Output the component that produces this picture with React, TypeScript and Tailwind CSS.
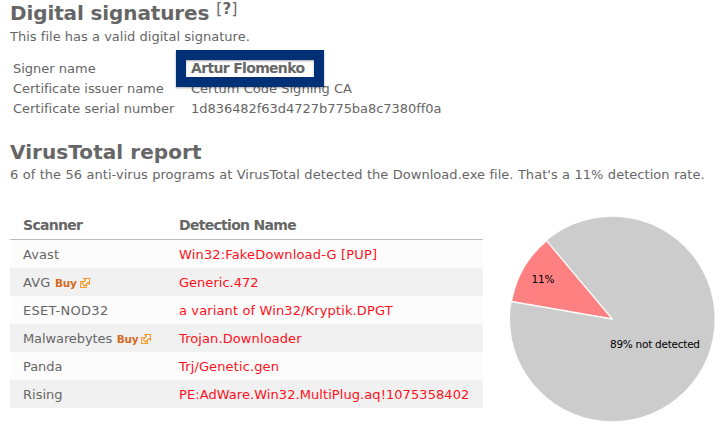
import React from "react";

type Row = { scanner: string; buy?: boolean; name: string; scannerTrack: string; nameTrack: string };

const rows: Row[] = [
  { scanner: "Avast", name: "Win32:FakeDownload-G [PUP]", scannerTrack: "tracking-[0.1px]", nameTrack: "tracking-[0.16px]" },
  { scanner: "AVG", buy: true, name: "Generic.472", scannerTrack: "tracking-[0.1px]", nameTrack: "tracking-[0.02px]" },
  { scanner: "ESET-NOD32", name: "a variant of Win32/Kryptik.DPGT", scannerTrack: "tracking-[0.28px]", nameTrack: "tracking-[0.13px]" },
  { scanner: "Malwarebytes", buy: true, name: "Trojan.Downloader", scannerTrack: "tracking-[-0.1px]", nameTrack: "tracking-[0.1px]" },
  { scanner: "Panda", name: "Trj/Genetic.gen", scannerTrack: "tracking-[-0.05px]", nameTrack: "tracking-[0.13px]" },
  { scanner: "Rising", name: "PE:AdWare.Win32.MultiPlug.aq!1075358402", scannerTrack: "tracking-[0px]", nameTrack: "tracking-[0.07px]" },
];

function ExternalIcon() {
  return (
    <svg width="10" height="10" viewBox="0 0 10 10" className="mb-px ml-[3px] shrink-0" fill="none">
      <path d="M4 3.5H.5V9.5H6.5V6.5" stroke="#f9a02b" strokeWidth="1.2" />
      <path d="M4 .5H9.5V6L7.8 4.5L4.5 7.8L2.3 5.6L5.6 2.3Z" fill="#fff" stroke="#f9932b" strokeWidth="1.2" />
    </svg>
  );
}

function Pie() {
  return (
    <svg width="208" height="208" viewBox="508 215 208 208" className="block shrink-0">
      <circle cx="612.3" cy="319" r="102.3" fill="#ccc" />
      <path d="M612.3 319L546.5 240.7A102.3 102.3 0 0 0 511.5 301.5Z" fill="#ff8080" stroke="#fff" strokeWidth="1.3" strokeLinejoin="round" />
      <text x="531.5" y="283" fontSize="10.5" fill="#000" textLength="23">11%</text>
      <text x="610" y="348" fontSize="10.5" fill="#000" textLength="90">89% not detected</text>
    </svg>
  );
}

export default function App() {
  return (
    <div className="h-[435px] w-[722px] overflow-hidden bg-white pl-[10px] font-['DejaVu_Sans',sans-serif] text-[13px] text-[#666]">
      <div className="flex h-[27px] items-start">
        <h2 className="text-[20px] leading-[26px] font-bold tracking-[-0.12px] whitespace-nowrap">Digital signatures</h2>
        <span className="ml-[7px] text-[15px] leading-[18px] tracking-[0.3px]">[<b>?</b>]</span>
      </div>
      <p className="h-[32px] leading-[20px] tracking-[0.02px] whitespace-nowrap">This file has a valid digital signature.</p>
      <div className="relative grid h-[80px] grid-cols-[178px_1fr] grid-rows-[20px_20px_20px] pl-[3px] leading-[20px] whitespace-nowrap">
        <span>Signer name</span>
        <span />
        <span className="tracking-[-0.03px]">Certificate issuer name</span>
        <span className="tracking-[0.02px]">Certum Code Signing CA</span>
        <span className="tracking-[-0.02px]">Certificate serial number</span>
        <span className="tracking-[-0.04px]">1d836482f63d4727b775ba8c7380ff0a</span>
        <div className="absolute top-[-9px] left-[166px] h-[37px] w-[148px] border-[10px] border-[#003075] bg-white pl-[5px] text-[14px] leading-[17px] font-bold tracking-[-0.67px] shadow-[0_1px_2px_rgba(0,0,0,0.35)]">
          <div className="absolute inset-0 shadow-[inset_0_1px_2px_rgba(0,0,0,0.35)]" />
          Artur Flomenko
        </div>
      </div>
      <h2 className="h-[26px] text-[20px] leading-[26px] font-bold tracking-[0.06px] whitespace-nowrap">VirusTotal report</h2>
      <p className="h-[46px] leading-[20px] tracking-[0.04px] whitespace-nowrap [word-spacing:0.2px]">6 of the 56 anti-virus programs at VirusTotal detected the Download.exe file. That's a 11% detection rate.</p>
      <div className="flex items-start">
        <table className="w-[473px] table-fixed border-separate border-spacing-0">
          <thead>
            <tr className="text-left text-[14px] leading-[28px] tracking-[-0.7px]">
              <th className="w-[156px] border-b border-[#bbb] p-0 pl-[13px]">Scanner</th>
              <th className="border-b border-[#bbb] p-0 pl-[13px]">Detection Name</th>
            </tr>
          </thead>
          <tbody>
            {rows.map((r) => (
              <tr key={r.scanner} className="h-[28px] leading-[26px] odd:bg-[#fcfcfc] even:bg-[#f1f1f1]">
                <td className="p-0 pt-[2px] pl-[13px]">
                  <div className="flex h-[26px] items-center whitespace-nowrap">
                    <span className={r.scannerTrack}>{r.scanner}</span>
                    {r.buy && (
                      <span className="ml-[4.6px] flex h-[26px] items-center text-[10.5px] font-bold tracking-[-0.25px] text-[#d2691e]">
                        Buy
                        <ExternalIcon />
                      </span>
                    )}
                  </div>
                </td>
                <td className="p-0 pt-[2px] pl-[13px] whitespace-nowrap text-[#ff1020]">
                  <div className={r.nameTrack}>{r.name}</div>
                </td>
              </tr>
            ))}
          </tbody>
        </table>
        <div className="mt-[4px] ml-[25px]">
          <Pie />
        </div>
      </div>
    </div>
  );
}
